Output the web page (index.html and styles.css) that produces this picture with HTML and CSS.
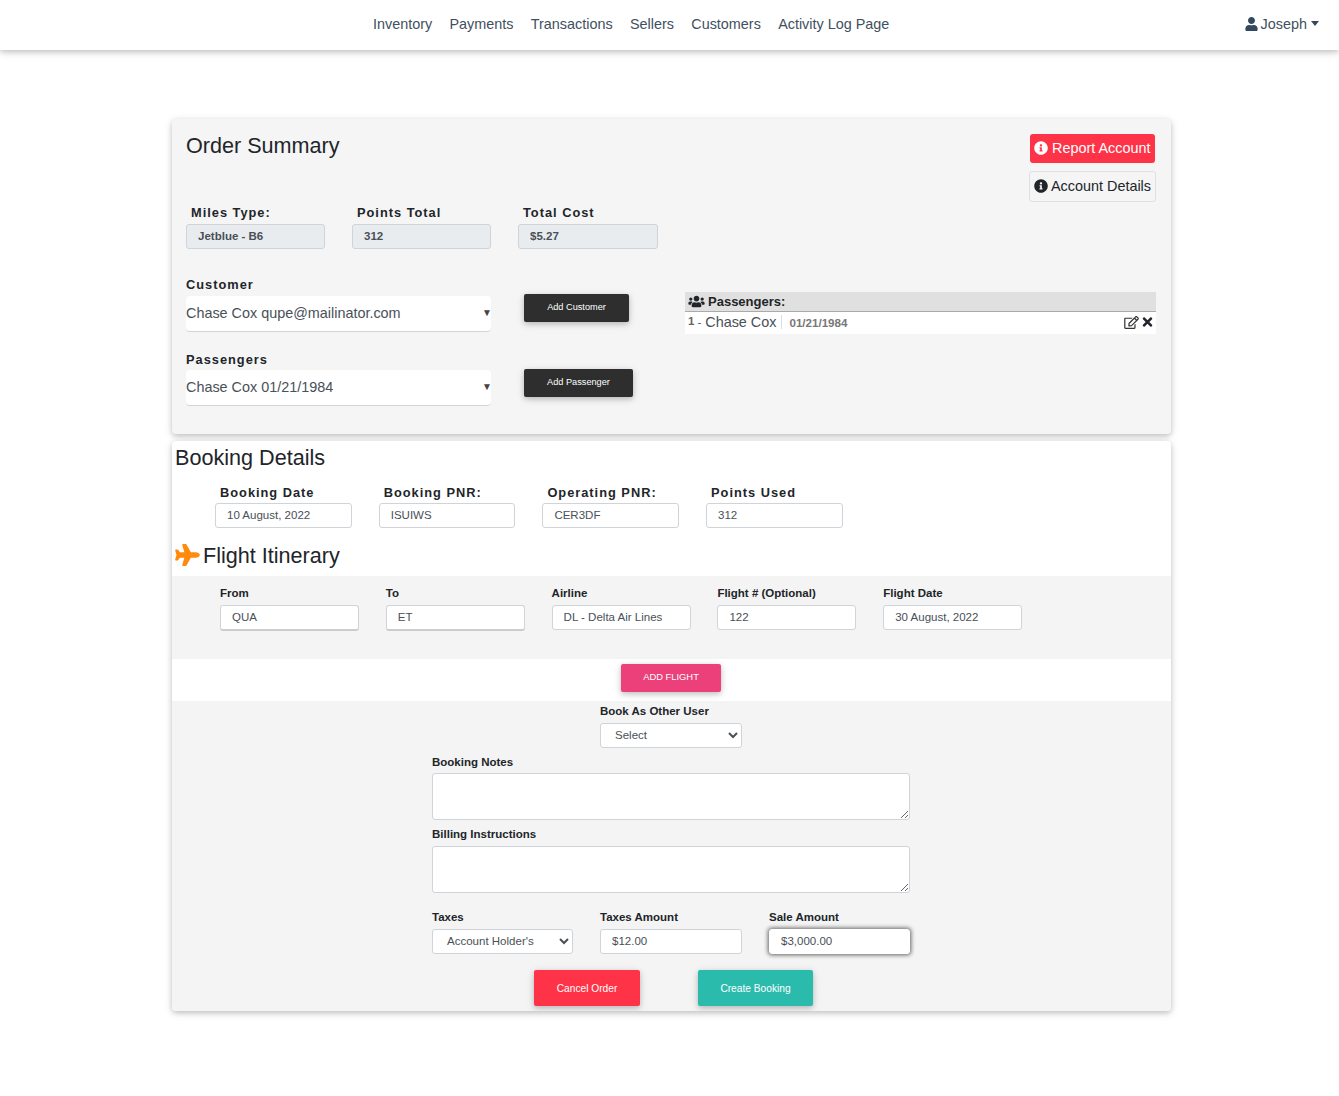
FILE: index.html
```html
<!DOCTYPE html>
<html lang="en">
<head>
<meta charset="utf-8">
<title>Order Summary</title>
<link rel="stylesheet" href="styles.css">
</head>
<body>
<nav class="nav">
  <div class="nav-links">
    <a>Inventory</a><a>Payments</a><a>Transactions</a><a>Sellers</a><a>Customers</a><a>Activity Log Page</a>
  </div>
  <div class="nav-user">
    <svg class="ic-user" viewBox="0 0 448 512"><path d="M224 256c70.7 0 128-57.3 128-128S294.7 0 224 0 96 57.3 96 128s57.3 128 128 128zm89.6 32h-16.7c-22.2 10.2-46.9 16-72.9 16s-50.6-5.8-72.9-16h-16.7C60.2 288 0 348.2 0 422.4V464c0 26.5 21.5 48 48 48h352c26.5 0 48-21.5 48-48v-41.6c0-74.2-60.2-134.4-134.4-134.4z"/></svg>
    <span>Joseph</span><i class="caret"></i>
  </div>
</nav>
<main class="main">
  <section class="card summary">
    <div class="summary-head">
      <h2 class="title summary-title">Order Summary</h2>
      <div class="head-actions">
        <a class="btn-report"><svg class="ic-info" viewBox="0 0 512 512"><path d="M256 8C119.043 8 8 119.083 8 256c0 136.997 111.043 248 248 248s248-111.003 248-248C504 119.083 392.957 8 256 8zm0 110c23.196 0 42 18.804 42 42s-18.804 42-42 42-42-18.804-42-42 18.804-42 42-42zm56 254c0 6.627-5.373 12-12 12h-88c-6.627 0-12-5.373-12-12v-24c0-6.627 5.373-12 12-12h12v-64h-12c-6.627 0-12-5.373-12-12v-24c0-6.627 5.373-12 12-12h64c6.627 0 12 5.373 12 12v100h12c6.627 0 12 5.373 12 12v24z"/></svg>Report Account</a>
        <a class="btn-details"><svg class="ic-info" viewBox="0 0 512 512"><path d="M256 8C119.043 8 8 119.083 8 256c0 136.997 111.043 248 248 248s248-111.003 248-248C504 119.083 392.957 8 256 8zm0 110c23.196 0 42 18.804 42 42s-18.804 42-42 42-42-18.804-42-42 18.804-42 42-42zm56 254c0 6.627-5.373 12-12 12h-88c-6.627 0-12-5.373-12-12v-24c0-6.627 5.373-12 12-12h12v-64h-12c-6.627 0-12-5.373-12-12v-24c0-6.627 5.373-12 12-12h64c6.627 0 12 5.373 12 12v100h12c6.627 0 12 5.373 12 12v24z"/></svg>Account Details</a>
      </div>
    </div>
    <div class="row-summary">
      <div class="field"><label class="label-sp indent">Miles Type:</label><input class="input readonly" value="Jetblue - B6" readonly></div>
      <div class="field"><label class="label-sp indent">Points Total</label><input class="input readonly" value="312" readonly></div>
      <div class="field"><label class="label-sp indent">Total Cost</label><input class="input readonly" value="$5.27" readonly></div>
    </div>
    <div class="people">
      <div class="people-field">
        <label class="label-sp">Customer</label>
        <div class="fake-select"><span>Chase Cox qupe@mailinator.com</span><span class="tri">▼</span></div>
      </div>
      <a class="btn-dark">Add Customer</a>
      <div class="pass-panel">
        <div class="pass-head"><svg class="ic-users" viewBox="0 0 640 512"><path d="M96 224c35.3 0 64-28.7 64-64s-28.7-64-64-64-64 28.7-64 64 28.7 64 64 64zm448 0c35.3 0 64-28.7 64-64s-28.7-64-64-64-64 28.7-64 64 28.7 64 64 64zm32 32h-64c-17.6 0-33.5 7.1-45.1 18.6 40.3 22.1 68.9 62 75.1 109.4h66c17.7 0 32-14.3 32-32v-32c0-35.3-28.7-64-64-64zm-256 0c61.9 0 112-50.1 112-112S381.9 32 320 32 208 82.1 208 144s50.1 112 112 112zm76.8 32h-8.3c-20.8 10-43.9 16-68.5 16s-47.6-6-68.5-16h-8.3C179.6 288 128 339.6 128 403.2V432c0 26.5 21.5 48 48 48h288c26.5 0 48-21.5 48-48v-28.8c0-63.6-51.6-115.2-115.2-115.2zm-223.7-13.4C161.5 263.1 145.6 256 128 256H64c-35.3 0-64 28.7-64 64v32c0 17.7 14.3 32 32 32h65.9c6.3-47.4 34.9-87.3 75.2-109.4z"/></svg>Passengers:</div>
        <div class="pass-row">
          <span class="pass-num">1</span><span class="pass-dash">-</span><span class="pass-name">Chase Cox</span><span class="pass-date">01/21/1984</span>
          <span class="pass-icons">
            <svg class="ic-edit" viewBox="0 0 576 512"><path d="M402.3 344.9l32-32c5-5 13.7-1.5 13.7 5.7V464c0 26.5-21.5 48-48 48H48c-26.5 0-48-21.5-48-48V112c0-26.5 21.5-48 48-48h273.5c7.1 0 10.7 8.6 5.7 13.7l-32 32c-1.5 1.5-3.5 2.3-5.7 2.3H48v352h352V350.5c0-2.1.8-4.1 2.3-5.6zm156.6-201.8L296.3 405.7l-90.4 10c-26.2 2.9-48.5-19.2-45.6-45.6l10-90.4L432.9 17.1c22.9-22.9 59.9-22.9 82.7 0l43.2 43.2c22.9 22.9 22.9 60 .1 82.8zM460.1 174L402 115.9 216.2 301.8l-7.3 65.3 65.3-7.3L460.1 174zm64.8-79.7l-43.2-43.2c-4.1-4.1-10.8-4.1-14.8 0L436 82l58.1 58.1 30.9-30.9c4-4.2 4-10.8-.1-14.9z"/></svg>
            <svg class="ic-times" viewBox="0 0 352 512"><path d="M242.72 256l100.07-100.07c12.28-12.28 12.28-32.19 0-44.48l-22.24-22.24c-12.28-12.28-32.19-12.28-44.48 0L176 189.28 75.93 89.21c-12.28-12.28-32.19-12.28-44.48 0L9.21 111.45c-12.28 12.28-12.28 32.19 0 44.48L109.28 256 9.21 356.07c-12.28 12.28-12.28 32.19 0 44.48l22.24 22.24c12.28 12.28 32.2 12.28 44.48 0L176 322.72l100.07 100.07c12.28 12.28 32.2 12.28 44.48 0l22.24-22.24c12.28-12.28 12.28-32.19 0-44.48L242.72 256z"/></svg>
          </span>
        </div>
      </div>
      <div class="people-field tight">
        <label class="label-sp">Passengers</label>
        <div class="fake-select"><span>Chase Cox 01/21/1984</span><span class="tri">▼</span></div>
      </div>
      <a class="btn-dark btn-wide">Add Passenger</a>
    </div>
  </section>

  <section class="card booking">
    <h2 class="title booking-title">Booking Details</h2>
    <div class="row-booking">
      <div class="field-b"><label class="label-sp indent">Booking Date</label><input class="input" value="10 August, 2022"></div>
      <div class="field-b"><label class="label-sp indent">Booking PNR:</label><input class="input" value="ISUIWS"></div>
      <div class="field-b"><label class="label-sp indent">Operating PNR:</label><input class="input" value="CER3DF"></div>
      <div class="field-b"><label class="label-sp indent">Points Used</label><input class="input" value="312"></div>
    </div>
    <h2 class="title flight-title"><svg class="ic-plane" viewBox="0 0 576 512"><path d="M480 192H365.71L260.61 8.06A16.014 16.014 0 0 0 246.71 0h-65.5c-10.63 0-18.3 10.17-15.38 20.39L214.86 192H112l-43.2-57.6c-3.02-4.03-7.77-6.4-12.8-6.4H16.01C5.6 128-2.04 137.78.49 147.88L32 256 .49 364.12C-2.04 374.22 5.6 384 16.01 384H56c5.04 0 9.78-2.37 12.8-6.4L112 320h102.86l-49.03 171.6c-2.92 10.22 4.75 20.4 15.38 20.4h65.5c5.74 0 11.04-3.08 13.89-8.06L365.71 320H480c35.35 0 96-28.65 96-64s-60.65-64-96-64z"/></svg>Flight Itinerary</h2>
    <div class="band-flight">
      <div class="field-f"><label class="label">From</label><input class="input underlined" value="QUA"></div>
      <div class="field-f"><label class="label">To</label><input class="input underlined" value="ET"></div>
      <div class="field-f"><label class="label">Airline</label><input class="input" value="DL - Delta Air Lines"></div>
      <div class="field-f"><label class="label">Flight # (Optional)</label><input class="input" value="122"></div>
      <div class="field-f"><label class="label">Flight Date</label><input class="input" value="30 August, 2022"></div>
    </div>
    <div class="band-add"><a class="btn-pink">ADD FLIGHT</a></div>
    <div class="band-form">
      <div class="form-col">
        <div class="form-top">
          <div class="form-spacer"></div>
          <div>
            <label class="label">Book As Other User</label>
            <select class="input select"><option>Select</option></select>
          </div>
        </div>
        <label class="label label-notes">Booking Notes</label>
        <textarea class="area"></textarea>
        <label class="label label-notes label-billing">Billing Instructions</label>
        <textarea class="area"></textarea>
        <div class="form-amounts">
          <div><label class="label">Taxes</label><select class="input select"><option>Account Holder's</option></select></div>
          <div><label class="label">Taxes Amount</label><input class="input" value="$12.00"></div>
          <div><label class="label">Sale Amount</label><input class="input focused" value="$3,000.00"></div>
        </div>
        <div class="form-actions">
          <a class="btn-cancel">Cancel Order</a>
          <a class="btn-create">Create Booking</a>
        </div>
      </div>
    </div>
  </section>
</main>
</body>
</html>
```
FILE: styles.css
```css
* { box-sizing: border-box; }
html, body { margin: 0; padding: 0; }
body {
  font-family: "Liberation Sans", Arial, sans-serif;
  color: #212529;
  background: #fff;
  min-height: 1096px;
}
.nav {
  height: 50px;
  background: #fff;
  display: flex;
  align-items: center;
  justify-content: space-between;
  padding: 0 20px 2px 373px;
  box-shadow: 0 2px 5px rgba(0,0,0,.16), 0 2px 10px rgba(0,0,0,.12);
  font-size: 14.4px;
  color: #3f5060;
}
.nav-links { display: flex; gap: 17.3px; }
.nav-user { display: flex; align-items: center; }
.ic-user { width: 13px; height: 14px; fill: #34495e; margin-right: 3px; }
.caret {
  width: 0; height: 0; margin-left: 4px; margin-top: -2px;
  border-left: 4.5px solid transparent;
  border-right: 4.5px solid transparent;
  border-top: 5px solid #34495e;
}
.main { padding: 69px 0 0 172px; width: 1171px; }
.card {
  width: 999px;
  border-radius: 4px;
  box-shadow: 0 2px 5px rgba(0,0,0,.16), 0 2px 10px rgba(0,0,0,.12);
}
.summary { background: #f5f5f5; height: 315px; padding: 15px 15px 29px 14px; }
.title { margin: 0; font-size: 21.6px; font-weight: 400; line-height: 22px; color: #212529; }
.summary-title { margin-top: 1px; }
.summary-head { display: flex; justify-content: space-between; align-items: flex-start; }
.head-actions { display: flex; flex-direction: column; align-items: flex-end; gap: 8px; }
.ic-info { width: 14px; height: 14px; flex: none; }
.btn-report, .btn-details {
  display: flex; align-items: center; font-size: 14.4px; border-radius: 3px; padding: 0 4px 2px; white-space: nowrap;
}
.btn-report { height: 29px; width: 125px; margin-right: 1px; background: #ff3347; color: #fff; fill: #fff; gap: 4px; }
.btn-details { height: 31px; width: 127px; color: #212529; fill: #212529; border: 1px solid #dfe0e6; gap: 3px; }
.row-summary { display: flex; gap: 27px; margin-top: 3px; }
.field { width: 139px; }
.field:last-child { width: 140px; }
.label-sp, .label { display: block; font-weight: 700; color: #212529; }
.label-sp { font-size: 12.8px; letter-spacing: 1px; line-height: 15px; margin-bottom: 4px; }
.indent { padding-left: 5px; }
.label { font-size: 11.5px; line-height: 15px; margin-bottom: 4px; }
.input {
  display: block; width: 100%; height: 25px;
  padding: 0 11px 2px; font: 11.52px "Liberation Sans", Arial, sans-serif;
  color: #495057; background: #fff;
  border: 1px solid #ced4da; border-radius: 3px; outline: none;
}
.readonly { background: #e9ecef; font-weight: 700; }
.people {
  display: grid;
  grid-template-columns: 305px 128px 471px;
  column-gap: 33px;
  row-gap: 20px;
  margin-top: 28px;
  align-items: start;
}
.fake-select {
  height: 36px; background: #fff; border-radius: 4px; border-bottom: 1px solid #ced4da;
  display: flex; align-items: center; justify-content: space-between;
  font-size: 14.4px; color: #495057; padding-bottom: 2px;
}
.tight .label-sp { margin-bottom: 3px; }
.tri { font-size: 10px; color: #444; margin-right: -1px; }
.btn-dark {
  margin-top: 17px; width: 105px; height: 28px; display: flex; align-items: center; justify-content: center;
  background: #2e2e2e; color: #fff; font-size: 9.2px; font-weight: 400; border-radius: 2px; padding-bottom: 2px;
  box-shadow: 0 2px 5px rgba(0,0,0,.16), 0 2px 10px rgba(0,0,0,.12);
}
.btn-wide { width: 109px; }
.pass-panel { grid-row: span 2; margin-top: 15px; }
.pass-head {
  height: 20px; background: #e0e0e0; border-bottom: 1px solid #aaa;
  display: flex; align-items: center; padding-left: 3px;
  font-size: 13px; font-weight: 700; color: #212529;
}
.ic-users { width: 17px; height: 13px; margin-right: 3px; fill: #212529; }
.pass-row {
  height: 22px; background: #fff; display: flex; align-items: center; padding: 0 3px 2px;
  color: #495057;
}
.pass-num { font-size: 11.5px; font-weight: 700; color: #666; margin-top: -3px; }
.pass-dash { font-size: 11.5px; margin: 0 4px 0 3px; }
.pass-name { font-size: 14.4px; padding-right: 5px; border-right: 1px solid #ddd; line-height: 14px; }
.pass-date { font-size: 11.6px; font-weight: 700; color: #777; margin-left: 7px; }
.pass-icons { margin-left: auto; display: flex; align-items: center; gap: 3px; }
.ic-edit { width: 15px; height: 13px; fill: #333; }
.ic-times { width: 11px; height: 14px; fill: #212529; }

.booking { background: #fff; height: 570px; margin-top: 7px; padding-top: 6px; overflow: hidden; }
.booking-title { padding-left: 3px; }
.row-booking { display: flex; gap: 27px; margin: 16px 0 0 43px; }
.row-booking .label-sp { margin-bottom: 3px; }
.field-b { width: 136.7px; }
.flight-title { display: flex; align-items: center; margin: 15px 0 7px; padding-left: 3px; height: 26px; }
.ic-plane { width: 25px; height: 22px; margin: -2px 3px 0 0; fill: #ff8a0c; }
.band-flight { background: #f4f4f4; height: 83px; padding: 10px 0 0 48px; display: flex; gap: 26.8px; }
.field-f { width: 139px; }
.underlined { border-bottom: 2px solid #ccc; height: 26px; }
.band-add { height: 42px; padding-top: 5px; display: flex; justify-content: center; }
.btn-pink {
  width: 100px; height: 28px; background: #ec407a; color: #fff; font-size: 9.4px; border-radius: 2px;
  display: flex; align-items: center; justify-content: center; padding-bottom: 4px; margin-right: 1px;
  box-shadow: 0 2px 5px rgba(0,0,0,.16), 0 2px 10px rgba(0,0,0,.12);
}
.band-form { background: #f4f4f4; height: 310px; padding: 3px 0 0 260px; }
.form-col { width: 478px; }
.form-top { display: grid; grid-template-columns: 141px 142px 141px; column-gap: 27px; }
.form-top .form-spacer { grid-column: 1; }
.select { padding: 0 10px 2px; }
.label-notes { margin-top: 7px; margin-bottom: 3px; }
.label-billing { margin-bottom: 4px; }
.area {
  display: block; width: 100%; height: 47px; background: #fff;
  border: 1px solid #ced4da; border-radius: 3px; outline: none;
}
.form-amounts { display: grid; grid-template-columns: 141px 142px 141px; column-gap: 27px; margin-top: 17px; }
.focused { box-shadow: 0 0 4px 1px rgba(0,0,0,.6); border-color: #fff; }
.form-actions { display: flex; gap: 58px; margin: 16px 0 0 102px; }
.btn-cancel, .btn-create {
  height: 36px; display: flex; align-items: center; justify-content: center; color: #fff; font-size: 10.2px; border-radius: 2px;
  box-shadow: 0 2px 5px rgba(0,0,0,.16), 0 2px 10px rgba(0,0,0,.12);
}
.btn-cancel { width: 106px; background: #ff3347; }
.btn-create { width: 115px; background: #2bbbad; }
```
